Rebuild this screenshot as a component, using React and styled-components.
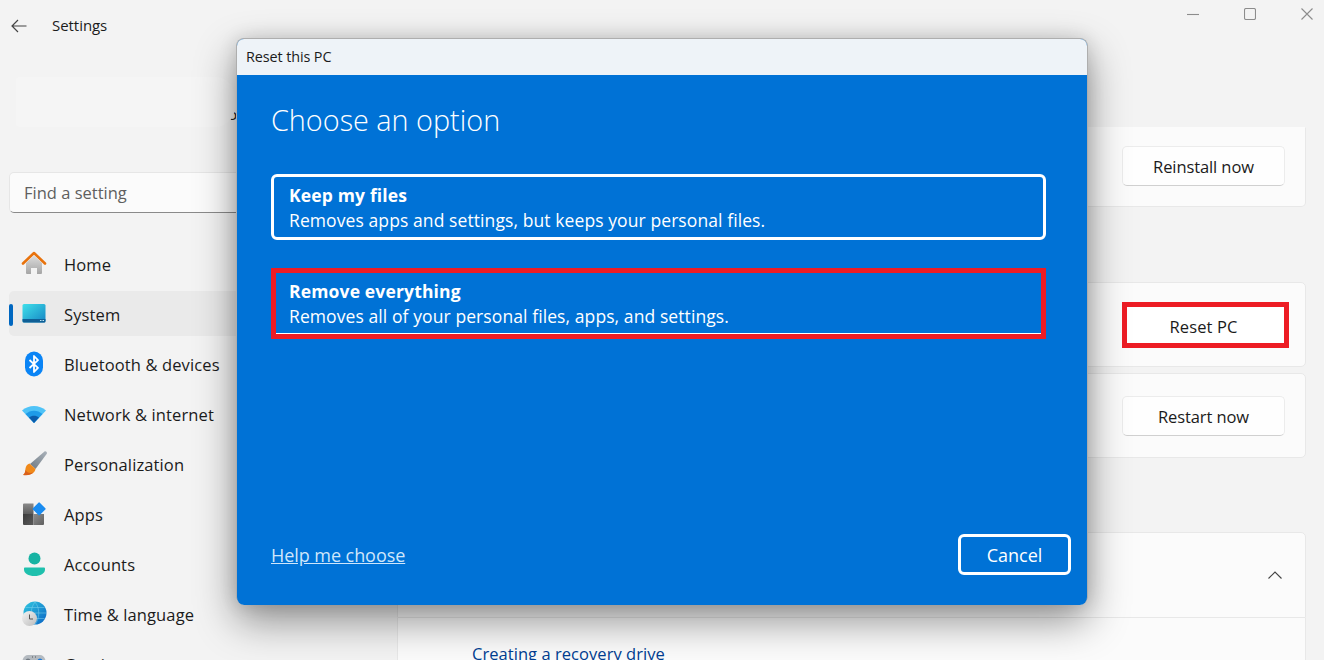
import React from 'react';
import styled, { createGlobalStyle } from 'styled-components';

const Global = createGlobalStyle`
  html, body { margin: 0; padding: 0; background: #f3f3f3; }
  * { box-sizing: border-box; }
`;

const Win = styled.div`
  position: relative;
  width: 1324px;
  height: 660px;
  overflow: hidden;
  background: #f3f3f3;
  color: #1b1b1b;
  font-family: "Open Sans", "Noto Sans", sans-serif;
  display: flex;
  flex-direction: column;
`;
const TitleBar = styled.header`
  flex: 0 0 51px;
  display: flex;
  align-items: center;
  padding-left: 11px;
`;
const AppName = styled.span`
  margin: 0 0 2px 25px;
  font-size: 15px;
  letter-spacing: -0.05px;
`;
const WinControls = styled.div`
  margin-left: auto;
  display: flex;
  align-items: center;
  gap: 45px;
  padding-right: 11px;
  height: 100%;
  padding-bottom: 24px;
`;
const Columns = styled.div`
  flex: 1;
  display: flex;
  min-height: 0;
`;
const Sidebar = styled.aside`
  flex: 0 0 397px;
  padding: 26px 0 0 9px;
`;
const Profile = styled.div`
  position: relative;
  height: 50px;
  margin: 0 0 45px 7px;
  display: flex;
`;
const ProfileBlur = styled.div`
  position: relative;
  width: 219px;
  height: 50px;
  border-radius: 4px 20px 20px 4px;
  background: #f5f5f5;
`;
const CutGlyph = styled.span`
  position: absolute;
  left: 214px;
  top: 28px;
  font-size: 15px;
  line-height: 18px;
  color: #222;
`;
const Search = styled.div`
  height: 41px;
  width: 370px;
  display: flex;
  align-items: center;
  padding-left: 14px;
  background: #fbfbfb;
  border: 1px solid #e6e6e6;
  border-bottom: 1px solid #8a8a8a;
  border-radius: 5px;
  font-size: 16.5px;
  color: #5f5f5f;
`;
const Nav = styled.nav`
  margin-top: 28px;
  display: flex;
  flex-direction: column;
  gap: 5px;
`;
const NavItem = styled.div`
  position: relative;
  flex: 0 0 45px;
  width: 372px;
  display: flex;
  align-items: center;
  padding: 1px 0 0 13px;
  gap: 18px;
  border-radius: 5px;
  font-size: 16.5px;
  letter-spacing: 0.12px;
  background: ${p => (p.$active ? '#eaeaea' : 'transparent')};
`;
const Indicator = styled.i`
  position: absolute;
  left: 0;
  top: 13px;
  width: 4px;
  height: 22px;
  border-radius: 2px;
  background: #0067c0;
`;
const IconSlot = styled.svg`
  width: 24px;
  height: 24px;
  flex: none;
  overflow: visible;
`;
const Main = styled.main`
  flex: 1;
  padding: 76px 18px 0 0;
  min-width: 0;
`;
const Card = styled.section`
  height: ${p => p.$h}px;
  display: flex;
  align-items: center;
  justify-content: flex-end;
  padding: 0 20px ${p => (p.$clipped ? 2 : 0)}px 0;
  margin-top: ${p => p.$mt || 0}px;
  background: #fbfbfb;
  border: 1px solid #e8e8e8;
  border-top-color: ${p => (p.$clipped ? 'transparent' : '#e8e8e8')};
  border-radius: ${p => (p.$clipped ? '0 0 5px 5px' : p.$open ? '5px 5px 0 0' : '5px')};
`;
const ActionButton = styled.button`
  width: 163px;
  height: 40px;
  background: #fefefe;
  border: 1px solid #ececec;
  border-bottom-color: #d0d0d0;
  border-radius: 5px;
  font: inherit;
  font-size: 16.5px;
  color: #1b1b1b;
  padding: 1px 0 0;
  letter-spacing: -0.1px;
`;
const MarkedButton = styled(ActionButton)`
  width: 167px;
  height: 46px;
  margin-right: -4px;
  padding: 3px 4px 0 0;
  background: #fff;
  border: 5px solid #ed1c24;
  border-radius: 0;
  letter-spacing: 0.1px;
`;
const ChevronWrap = styled.div`
  padding-right: 3px;
  display: flex;
`;
const Expanded = styled.div`
  height: 60px;
  background: #fbfbfb;
  border: 1px solid #e8e8e8;
  border-top: none;
  padding: 26px 0 0 74px;
  font-size: 16.5px;
  line-height: 20px;
  letter-spacing: 0.05px;
  color: #003e92;
`;
const DialogShadow = styled.div`
  position: absolute;
  left: 236px;
  top: 38px;
  width: 852px;
  height: 567px;
  border-radius: 8px;
  box-shadow: 0 16px 40px rgba(0, 0, 0, 0.42), 0 0 18px rgba(0, 0, 0, 0.12);
`;
const Dialog = styled.div`
  position: absolute;
  left: 236px;
  top: 38px;
  width: 852px;
  height: 567px;
  display: flex;
  flex-direction: column;
  overflow: hidden;
  border-radius: 8px;
  border: 1px solid #aeaeae;
  border-bottom: none;
  background: #0072d6;
`;
const DialogHead = styled.div`
  flex: 0 0 36px;
  background: #eef3f8;
  display: flex;
  align-items: center;
  padding: 0 0 2px 9px;
  font-size: 14.4px;
  letter-spacing: -0.1px;
`;
const DialogBody = styled.div`
  flex: 1;
  display: flex;
  flex-direction: column;
  padding: 0 16px 30px 34px;
  color: #fff;
`;
const Heading = styled.h1`
  margin: 23px 0 32px;
  font-size: 28.8px;
  line-height: 44px;
  font-weight: 300;
`;
const Option = styled.div`
  width: 775px;
  height: ${p => (p.$marked ? 71 : 66)}px;
  margin-bottom: 28px;
  display: flex;
  flex-direction: column;
  justify-content: center;
  padding: ${p => (p.$marked ? '0 0 0 13px' : '2px 0 0 15px')};
  border: ${p => (p.$marked ? '5px solid #ed1c24' : '3px solid #fff')};
  border-radius: ${p => (p.$marked ? 0 : '6px')};
  box-shadow: ${p => (p.$marked ? 'inset 0 -1px 0 #fff' : 'none')};
`;
const OptionName = styled.div`
  font-size: 17.5px;
  line-height: 25px;
  font-weight: 700;
  letter-spacing: 0.16px;
`;
const OptionText = styled.div`
  font-size: 17.5px;
  line-height: 25px;
  letter-spacing: 0.09px;
`;
const DialogFoot = styled.div`
  margin-top: auto;
  display: flex;
  align-items: center;
  justify-content: space-between;
`;
const HelpLink = styled.a`
  font-size: 18px;
  color: #cfe6fb;
  text-decoration: underline;
  letter-spacing: -0.06px;
`;
const CancelButton = styled.button`
  width: 113px;
  height: 41px;
  background: transparent;
  border: 3px solid #fff;
  border-radius: 6px;
  color: #fff;
  font: inherit;
  font-size: 18px;
  padding: 0;
`;

const Svg = ({ children }) => <IconSlot viewBox="0 0 24 24">{children}</IconSlot>;

const HomeIcon = () => (
  <Svg>
    <defs>
      <linearGradient id="hw" x1="0" y1="0" x2="0" y2="1"><stop offset="0" stopColor="#dcdcdc" /><stop offset="1" stopColor="#a5a5a5" /></linearGradient>
    </defs>
    <path d="M4 11 12 3.500 20 11V21a1 1 0 0 1-1 1h-4v-6h-6v6H5a1 1 0 0 1-1-1Z" fill="url(#hw)" />
    <path d="M1 11.500 12 1l11 10.500" fill="none" stroke="#e8720c" strokeWidth="2.600" strokeLinecap="round" strokeLinejoin="round" />
  </Svg>
);
const SystemIcon = () => (
  <Svg>
    <defs>
      <linearGradient id="sc" x1="0" y1="0" x2="1" y2="1"><stop offset="0" stopColor="#3fe0ea" /><stop offset="1" stopColor="#1585c4" /></linearGradient>
    </defs>
    <rect x="0.500" y="2" width="23" height="18.500" rx="1.500" fill="url(#sc)" />
    <path d="M0.500 17H23.500V19a1.500 1.500 0 0 1-1.500 1.500H2A1.500 1.500 0 0 1 .5 19Z" fill="#0f5f96" />
    <path d="M18 18.500h1.500M20.500 18.500H22" stroke="#bfe6f5" strokeWidth="1" />
  </Svg>
);
const BluetoothIcon = () => (
  <Svg>
    <rect x="3" y="-0.500" width="18" height="25" rx="9" fill="#0a84f5" />
    <path d="M7.500 8 16 15.800 12 20V4l4 4.200L7.500 16" fill="none" stroke="#fff" strokeWidth="1.800" strokeLinejoin="round" />
  </Svg>
);
const WifiIcon = () => (
  <Svg>
    <path d="M0 8.500C6.500 2.500 17.500 2.500 24 8.500L12 21Z" fill="#4fc3f7" />
    <path d="M3.500 12C8.500 7.500 15.500 7.500 20.500 12L12 21Z" fill="#1e9be8" />
    <path d="M7 15.500c3-2.500 7-2.500 10 0L12 21Z" fill="#0b5cab" />
  </Svg>
);
const BrushIcon = () => (
  <Svg>
    <defs>
      <linearGradient id="br" x1="0" y1="1" x2="1" y2="0"><stop offset="0" stopColor="#6f7a84" /><stop offset="1" stopColor="#aab2ba" /></linearGradient>
    </defs>
    <path d="M22.500 -.5c1.300-.8 3 .8 2.300 2.200L13.500 17 8 12Z" fill="url(#br)" />
    <path d="M7.500 11.500 13.500 17c-.7 4-4.500 6.500-12.500 6 2.500-1.500 2-4 2.500-6.500.4-2.500 1.800-4.300 4-5Z" fill="#f0891a" />
    <path d="M3.500 18C5 21 8 21.500 11 20.500 9 23 5.500 23.600 1 23c1.500-1 2.200-3 2.500-5Z" fill="#d9601a" />
  </Svg>
);
const AppsIcon = () => (
  <Svg>
    <defs>
      <linearGradient id="a1" x1="0" y1="0" x2="0" y2="1"><stop offset="0" stopColor="#8a8a8a" /><stop offset="1" stopColor="#5c5c5c" /></linearGradient>
      <linearGradient id="a2" x1="0" y1="0" x2="1" y2="1"><stop offset="0" stopColor="#3a3a3a" /><stop offset="1" stopColor="#5a5a5a" /></linearGradient>
      <linearGradient id="a3" x1="0" y1="0" x2="1" y2="1"><stop offset="0" stopColor="#8c8c8c" /><stop offset="1" stopColor="#5f5f5f" /></linearGradient>
    </defs>
    <path d="M1 2.500A1 1 0 0 1 2 1.500H11.500V12H1Z" fill="url(#a1)" />
    <path d="M1 12H11.500V23H2A1 1 0 0 1 1 22Z" fill="url(#a2)" />
    <path d="M11.500 12H22V22A1 1 0 0 1 21 23H11.500Z" fill="url(#a3)" />
    <rect x="12.200" y="2" width="9.800" height="9.800" rx="1" transform="rotate(45 17.100 6.900)" fill="#1a8cf0" />
  </Svg>
);
const AccountsIcon = () => (
  <Svg>
    <circle cx="12.500" cy="6.500" r="6" fill="#17b3a3" />
    <path d="M2.500 15.500H22a1 1 0 0 1 1 1v1c0 4-4.500 6.500-10.500 6.500S2 21.500 2 17.500v-1a1 1 0 0 1 .5-1Z" fill="#1fc0ad" />
  </Svg>
);
const TimeIcon = () => (
  <Svg>
    <defs>
      <linearGradient id="g1" x1="0" y1="0" x2="1" y2="1"><stop offset="0" stopColor="#30c8e0" /><stop offset="1" stopColor="#0a63c4" /></linearGradient>
      <linearGradient id="g2" x1="0" y1="0" x2="1" y2="1"><stop offset="0" stopColor="#f4f4f4" /><stop offset="1" stopColor="#bcbcbc" /></linearGradient>
    </defs>
    <circle cx="13" cy="11" r="11.500" fill="url(#g1)" />
    <path d="M13 0c-5 6-5 16 0 22.500M13 0c5 6 5 16 0 22.500M2 11h22M3.500 5.500h19M3.500 16.500h19" stroke="#7fd4ee" strokeWidth=".7" fill="none" opacity=".7" />
    <circle cx="7.500" cy="16.500" r="7.500" fill="url(#g2)" />
    <path d="M7.500 12.500V17H11" fill="none" stroke="#555" strokeWidth="1" />
  </Svg>
);
const GamingIcon = () => (
  <Svg>
    <path d="M6 3h12c3 0 6 3 6 9s-2 8-4 8c-3 0-3-3-8-3s-5 3-8 3c-2 0-4-2-4-8s3-9 6-9Z" fill="#b4bac0" />
    <circle cx="6" cy="9" r="2.500" fill="#6f7880" />
    <circle cx="18" cy="9" r="2.500" fill="#1a78d8" />
    <path d="M10 5h1M13 5h1" stroke="#555" strokeWidth="1" />
  </Svg>
);

const items = [
  ['Home', HomeIcon],
  ['System', SystemIcon, true],
  ['Bluetooth & devices', BluetoothIcon],
  ['Network & internet', WifiIcon],
  ['Personalization', BrushIcon],
  ['Apps', AppsIcon],
  ['Accounts', AccountsIcon],
  ['Time & language', TimeIcon],
  ['Gaming', GamingIcon],
];

export default function App() {
  return (
    <Win>
      <Global />
      <TitleBar>
        <svg width="16" height="14" viewBox="0 0 16 14" fill="none" stroke="#444" strokeWidth="1.200"><path d="M15.500 7H1M7 1 1 7l6 6" /></svg>
        <AppName>Settings</AppName>
        <WinControls>
          <svg width="12" height="12" viewBox="0 0 12 12" stroke="#8c8c8c" strokeWidth="1.100" fill="none"><path d="M0 6.500h12" /></svg>
          <svg width="12" height="12" viewBox="0 0 12 12" stroke="#8c8c8c" strokeWidth="1.100" fill="none"><rect x=".5" y=".5" width="11" height="11" rx="1.500" /></svg>
          <svg width="12" height="12" viewBox="0 0 12 12" stroke="#8c8c8c" strokeWidth="1.100" fill="none"><path d="M.5.5l11 11M11.500.5l-11 11" /></svg>
        </WinControls>
      </TitleBar>
      <Columns>
        <Sidebar>
          <Profile>
            <CutGlyph>ɔ</CutGlyph>
            <ProfileBlur />
          </Profile>
          <Search>Find a setting</Search>
          <Nav>
            {items.map(([label, Icon, active]) => (
              <NavItem key={label} $active={active}>
                {active && <Indicator />}
                <Icon />
                {label}
              </NavItem>
            ))}
          </Nav>
        </Sidebar>
        <Main>
          <Card $h={80} $clipped>
            <ActionButton>Reinstall now</ActionButton>
          </Card>
          <Card $h={85} $mt={75}>
            <MarkedButton>Reset PC</MarkedButton>
          </Card>
          <Card $h={85} $mt={6}>
            <ActionButton>Restart now</ActionButton>
          </Card>
          <Card $h={86} $mt={74} $open>
            <ChevronWrap>
              <svg width="14" height="8" viewBox="0 0 14 8" fill="none" stroke="#444" strokeWidth="1.100"><path d="M.5 7.500 7 1l6.500 6.500" /></svg>
            </ChevronWrap>
          </Card>
          <Expanded>Creating a recovery drive</Expanded>
        </Main>
      </Columns>
      <DialogShadow />
      <Dialog>
        <DialogHead>Reset this PC</DialogHead>
        <DialogBody>
          <Heading>Choose an option</Heading>
          <Option>
            <OptionName>Keep my files</OptionName>
            <OptionText>Removes apps and settings, but keeps your personal files.</OptionText>
          </Option>
          <Option $marked>
            <OptionName>Remove everything</OptionName>
            <OptionText>Removes all of your personal files, apps, and settings.</OptionText>
          </Option>
          <DialogFoot>
            <HelpLink>Help me choose</HelpLink>
            <CancelButton>Cancel</CancelButton>
          </DialogFoot>
        </DialogBody>
      </Dialog>
    </Win>
  );
}
